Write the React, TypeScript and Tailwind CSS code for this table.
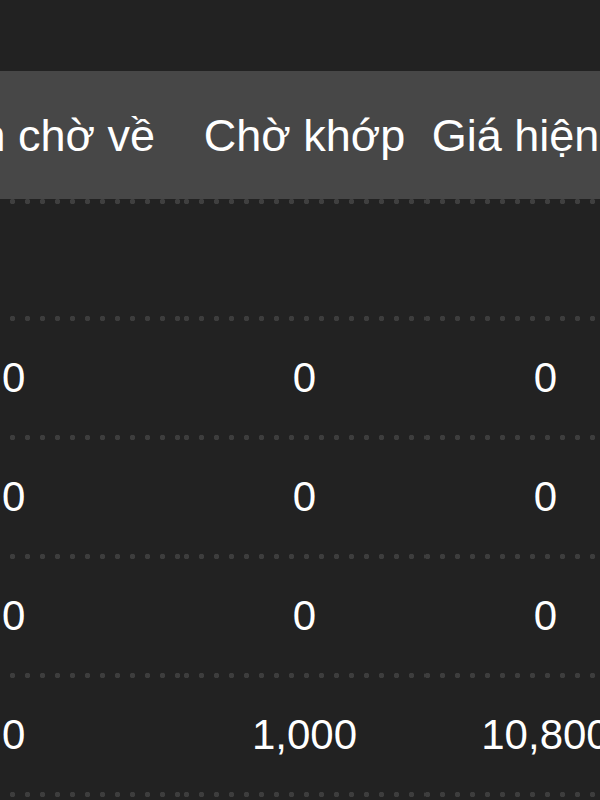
const rows = [
  ['0', '0', '0'],
  ['0', '0', '0'],
  ['0', '0', '0'],
  ['0', '1,000', '10,800'],
];

// dotted divider, drawn per cell so every column restarts its dots
function Dots({ first, header }: { first?: boolean; header?: boolean }) {
  return (
    <div
      className={`h-[5px] bg-repeat-x bg-[length:15px_5px] ${
        header
          ? 'bg-[radial-gradient(circle,#3f3f3f_2.5px,transparent_3px)]'
          : 'bg-[radial-gradient(circle,#3d3d3d_2.5px,transparent_3px)]'
      } ${first ? 'bg-[position:5px_0]' : 'bg-[position:-5px_0]'}`}
    />
  );
}

function Divider({ header }: { header?: boolean }) {
  return (
    <div className="flex">
      <div className="w-[184px] shrink-0"><Dots first header={header} /></div>
      <div className="w-[241px] shrink-0"><Dots header={header} /></div>
      <div className="w-[241px] shrink-0"><Dots header={header} /></div>
    </div>
  );
}

export default function App() {
  return (
    <div
      className="w-[600px] h-[800px] overflow-hidden bg-[#222222] text-white"
      style={{ fontFamily: '"Liberation Sans", Arial, sans-serif' }}
    >
      <div className="h-[71px]" />

      {/* Header */}
      <div className="flex h-[128px] w-[666px] bg-[#474747] text-[45px] leading-none">
        <div className="w-[184px] shrink-0 flex items-center justify-end pr-[29px] whitespace-nowrap">
          Tiền chờ về
        </div>
        <div className="w-[241px] shrink-0 flex items-center justify-center whitespace-nowrap">Chờ khớp</div>
        <div className="w-[241px] shrink-0 flex items-center justify-center whitespace-nowrap">Giá hiện tại</div>
      </div>
      <div className="w-[666px]">
        <Divider header />
      </div>

      {/* Body */}
      <div className="w-[666px] text-[42px] leading-none">
        <div className="h-[112px]" />
        <Divider />
        {rows.map((r, i) => (
          <div key={i}>
            <div className="flex h-[114px]">
              <div className="w-[184px] shrink-0 flex items-center pl-[2px]">{r[0]}</div>
              <div className="w-[241px] shrink-0 flex items-center justify-center">{r[1]}</div>
              <div className="w-[241px] shrink-0 flex items-center justify-center">{r[2]}</div>
            </div>
            <Divider />
          </div>
        ))}
      </div>
    </div>
  );
}
